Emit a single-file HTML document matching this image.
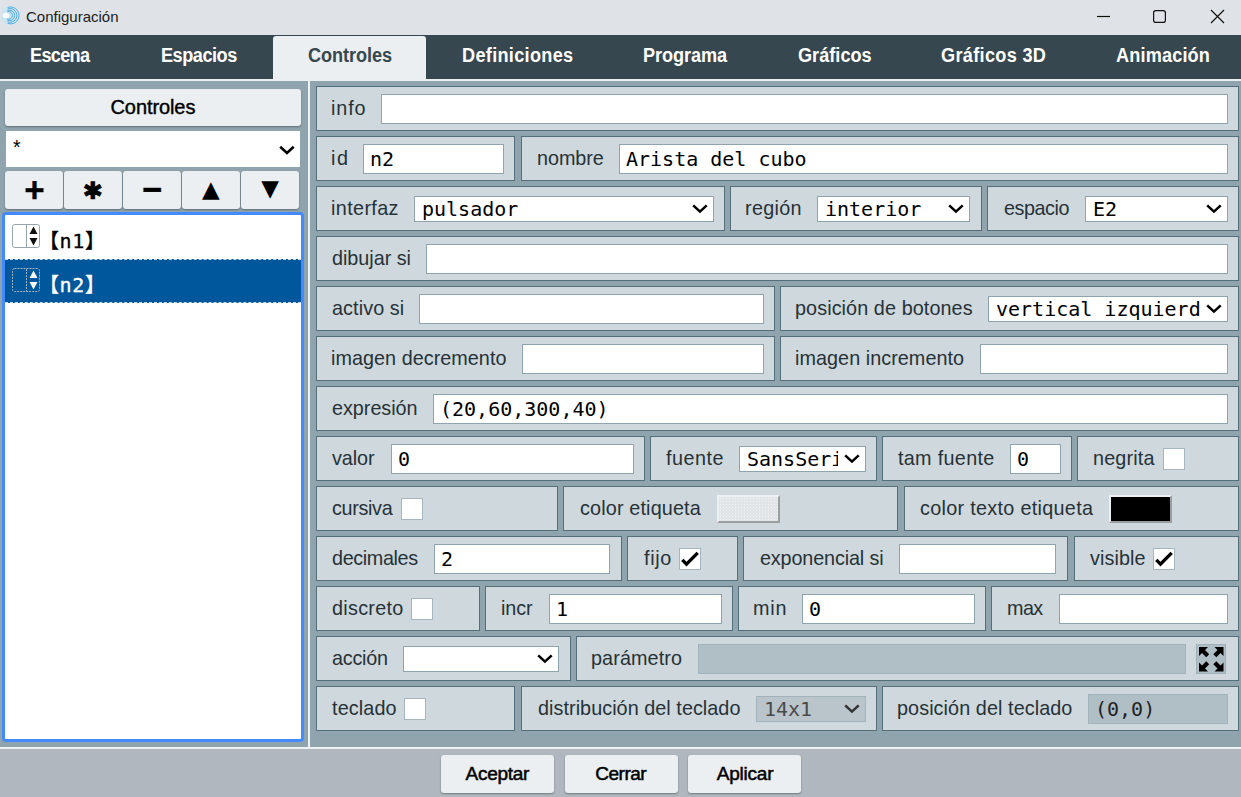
<!DOCTYPE html>
<html lang="es">
<head>
<meta charset="utf-8">
<title>Configuración</title>
<style>
*{box-sizing:border-box;margin:0;padding:0}
html,body{width:1241px;height:797px;overflow:hidden}
body{position:relative;background:#90a4ae;font-family:"Liberation Sans",sans-serif;font-size:20px;color:#263238}
#titlebar{position:absolute;left:0;top:0;width:1241px;height:35px;background:#dfe3e8}
#titlebar .ttl{position:absolute;left:26px;top:8px;font-size:15px;color:#1b1b1b;line-height:18px}
#titlebar .logo{position:absolute;left:0;top:5px;width:21px;height:21px}
#titlebar .wc{position:absolute;top:0;height:35px;width:20px}
#tabsbg{position:absolute;left:0;top:35px;width:1241px;height:44px;background:#37474f}
#tabs{position:absolute;left:0;top:35px;width:1241px;height:44px;list-style:none}
#tabs li{position:absolute;top:0;height:44px;line-height:40px;white-space:nowrap;transform:scaleX(.93);transform-origin:0 0;color:#fff;font-weight:bold;font-size:19.5px;letter-spacing:-0.5px}
#tabs li.active{color:#37474f}
#tabbg{position:absolute;left:273px;top:36px;width:153px;height:45px;background:#eceff1;border-radius:3px 3px 0 0}
#line{position:absolute;left:0;top:79px;width:1241px;height:2px;background:#eceff1}
#vline{position:absolute;left:308px;top:81px;width:2px;height:667px;background:#eef1f3}
#hline{position:absolute;left:0;top:747px;width:1241px;height:2px;background:#eef1f3}
#bottom{position:absolute;left:0;top:749px;width:1241px;height:48px;background:#b0b7bf}
.btn{position:absolute;background:#eceff1;border-radius:3px;box-shadow:0 1px 2px rgba(0,0,0,.35);text-align:center;color:#000;font-size:19px}
#bottom .btn{top:6px;width:113px;height:38px;line-height:38px;-webkit-text-stroke:0.5px #000}
.btn span{position:absolute;top:0;white-space:nowrap}
#left .title{left:5px;top:89px;width:296px;height:37px;line-height:36px;font-size:20px;-webkit-text-stroke:0.4px #000}
#left .filter{position:absolute;left:6px;top:131px;width:294px;height:36px;background:#fff}
#left .filter span{position:absolute;left:7px;top:4px;font-size:19.500px;line-height:24px;color:#000}
#left .filter svg{position:absolute;right:4px;top:14px;width:19px;height:12px;fill:none;stroke:#000;stroke-width:2.6}
#left .tool{top:171px;width:58px;height:38px}
#list{position:absolute;left:2px;top:212px;width:302px;height:530px;background:#fff;border:3px solid #448aff;border-radius:4px;list-style:none;overflow:hidden}
#list li{position:relative;height:44px;line-height:44px;font-family:"DejaVu Sans Mono","Noto Sans CJK SC",monospace;font-size:20px;color:#000;padding-left:34px;padding-top:4px;letter-spacing:.6px;-webkit-text-stroke:.3px;white-space:nowrap}
#list li.selected{background:#01579b;color:#fff;border-top:1px dashed #cfd8dc;border-bottom:1px dashed #cfd8dc;padding-top:3px}
#list li.selected .ico{top:8px}
#list li .ico{position:absolute;left:7px;top:9px;width:28px;height:24px}
.box{position:absolute;height:45px;background:#cfd8dc;border:1px solid #546e7a}
.box label{position:absolute;top:0;line-height:43px;white-space:nowrap;font-size:19.8px;color:#263238}
.box input{position:absolute;top:7px;height:30px;border:1px solid #90a4ae;background:#fff;font-family:"DejaVu Sans Mono",monospace;font-size:20px;color:#000;padding:0 0 0 6px;outline:none;border-radius:0}
.box input.dis{background:#b0bec5;border-color:#a3b3bb;color:#222}
.sel{position:absolute;top:9px;height:26px;border:1px solid #90a4ae;background:#fff;font-family:"DejaVu Sans Mono",monospace;font-size:20px;color:#000;overflow:hidden;white-space:nowrap}
.sel span{position:absolute;left:7px;top:0;line-height:25px}
.sel svg{position:absolute;right:0;top:0;width:27px;height:24px;background:#fff;fill:none;stroke:#000;stroke-width:2.6;padding:7px 4px 5px 4px}
.sel.dis{background:#bac5cb;border-color:#a3b3bb;color:#4a4a4a}
.sel.dis svg{background:#bac5cb;stroke:#333}
.chk{position:absolute;top:11px;width:22px;height:22px;background:#fff;border:1px solid #a7b6be}
.chk svg{position:absolute;left:-1px;top:-1px;width:22px;height:22px;fill:none;stroke:#000;stroke-width:3.4}
.colbtn{position:absolute;top:8px;height:28px;border:2px solid #eef1f3;border-right-color:#9b9d9e;border-bottom-color:#9b9d9e}
.colbtn.dots{background-image:radial-gradient(rgba(255,255,255,.45) .6px,transparent .9px);background-size:3px 3px}
.expand{position:absolute;top:7px;width:30px;height:30px;border:1px solid #9fb0b9;background:#b0bec5}
.expand svg{position:absolute;left:-1px;top:-1px;width:30px;height:30px;fill:#000}
</style>
</head>
<body>
<div id="titlebar">
<svg class="logo" viewBox="0 0 21 21"><circle cx="10.300" cy="10.400" r="9.400" fill="#c6e5f3"/><g fill="none" stroke="#4fa3da" stroke-width=".9"><path d="M7.66 2.53A8.4 8.4 0 1 1 7.66 18.27"/><path d="M7.62 4.03A6.8 6.8 0 1 1 7.62 16.77"/><path d="M7.45 5.43A5.3 5.3 0 1 1 7.45 15.37"/><path d="M7.13 6.75A3.9 3.9 0 1 1 7.13 14.05"/></g><ellipse cx="5.900" cy="10.400" rx="3.300" ry="2.700" fill="#fff"/></svg>
<span class="ttl">Configuración</span>
<svg class="wc" style="left:1094px" viewBox="0 0 20 35"><path d="M3 16.500h13" stroke="#111" stroke-width="1.200" fill="none"/></svg>
<svg class="wc" style="left:1150px" viewBox="0 0 20 35"><rect x="3.6" y="10.6" width="11.8" height="11.8" rx="2.2" stroke="#111" stroke-width="1.2" fill="none"/></svg>
<svg class="wc" style="left:1207px" viewBox="0 0 20 35"><path d="M4 10l13 13M17 10l-13 13" stroke="#111" stroke-width="1.200" fill="none"/></svg>
</div>
<div id="tabsbg"></div>
<div id="line"></div>
<div id="tabbg"></div>
<ul id="tabs"><li style="left:29.70px;letter-spacing:-0.740px">Escena</li><li style="left:160.80px;letter-spacing:-0.514px">Espacios</li><li class="active" style="left:307.60px;letter-spacing:-0.063px">Controles</li><li style="left:462.40px;letter-spacing:0.327px">Definiciones</li><li style="left:642.50px;letter-spacing:-0.100px">Programa</li><li style="left:797.70px;letter-spacing:0.014px">Gráficos</li><li style="left:941.10px;letter-spacing:0.340px">Gráficos 3D</li><li style="left:1115.60px;letter-spacing:0.163px">Animación</li></ul>
<div id="vline"></div>
<div id="left">
<div class="btn title"><span style="left:105.50px;letter-spacing:-0.088px">Controles</span></div>
<div class="filter"><span>*</span><svg viewBox="0 0 19 12"><path d="M3.200 1.800 L9.950 8 L16.700 1.800"/></svg></div>
<div class="btn tool" style="left:5px"><span style="left:19.200px;top:.6px;font:bold 35px/35px 'Liberation Sans',sans-serif;-webkit-text-stroke:.3px #000">+</span></div>
<div class="btn tool" style="left:64px"><span style="left:18.800px;top:8.200px;font:normal 24px/24px 'DejaVu Sans',sans-serif;-webkit-text-stroke:.7px #000">✱</span></div>
<div class="btn tool" style="left:123px"><span style="left:19.400px;top:1.200px;font:bold 34px/34px 'Liberation Sans',sans-serif;-webkit-text-stroke:.6px #000">−</span></div>
<div class="btn tool" style="left:182px"><span style="left:20.070px;top:6.600px;font:normal 23px/23px 'DejaVu Sans',sans-serif">▲</span></div>
<div class="btn tool" style="left:241px"><span style="left:20.300px;top:5.600px;font:normal 23px/23px 'DejaVu Sans',sans-serif">▼</span></div>
<ul id="list">
<li><svg class="ico" viewBox="0 0 28 24"><rect x=".5" y=".5" width="27" height="23" rx="2" fill="#fff" stroke="#9aa5aa"/><path d="M14.500 1v22" stroke="#9aa5aa"/><path d="M21.500 2.500l4 7.500h-8z M21.500 21.500l4-7.500h-8z" fill="#111"/></svg>【n1】</li>
<li class="selected"><svg class="ico" viewBox="0 0 28 24"><rect x=".5" y=".5" width="27" height="23" rx="2" fill="none" stroke="#9ab4c8" stroke-dasharray="2 1"/><path d="M14.500 1v22" stroke="#9ab4c8" stroke-dasharray="2 1"/><path d="M21.500 2.500l4 7.500h-8z M21.500 21.500l4-7.500h-8z" fill="#f4f8fb"/></svg>【n2】</li>
</ul>
</div>
<div id="right">
<div class="box" style="left:316px;top:86px;width:923px"><label style="left:14.00px;letter-spacing:0.867px">info</label><input type="text" class="" style="left:64px;width:847px" value=""></div>
<div class="box" style="left:316px;top:136px;width:199px"><label style="left:14.00px;letter-spacing:1.600px">id</label><input type="text" class="" style="left:46px;width:141px" value="n2"></div>
<div class="box" style="left:521px;top:136px;width:718px"><label style="left:15.00px;letter-spacing:-0.040px">nombre</label><input type="text" class="" style="left:97px;width:609px" value="Arista del cubo"></div>
<div class="box" style="left:316px;top:186px;width:409px"><label style="left:14.00px;letter-spacing:0.371px">interfaz</label><div class="sel " style="left:97px;width:300px"><span>pulsador</span><svg viewBox="0 0 19 12"><path d="M3.200 1.400 L9.950 7.600 L16.700 1.400"/></svg></div></div>
<div class="box" style="left:730px;top:186px;width:252px"><label style="left:14.00px;letter-spacing:0.320px">región</label><div class="sel " style="left:86px;width:153px"><span>interior</span><svg viewBox="0 0 19 12"><path d="M3.200 1.400 L9.950 7.600 L16.700 1.400"/></svg></div></div>
<div class="box" style="left:987px;top:186px;width:252px"><label style="left:16.00px;letter-spacing:-0.467px">espacio</label><div class="sel " style="left:97px;width:143px"><span>E2</span><svg viewBox="0 0 19 12"><path d="M3.200 1.400 L9.950 7.600 L16.700 1.400"/></svg></div></div>
<div class="box" style="left:316px;top:236px;width:923px"><label style="left:15.00px;letter-spacing:-0.022px">dibujar si</label><input type="text" class="" style="left:109px;width:802px" value=""></div>
<div class="box" style="left:316px;top:286px;width:459px"><label style="left:15.00px;letter-spacing:0.100px">activo si</label><input type="text" class="" style="left:102px;width:345px" value=""></div>
<div class="box" style="left:780px;top:286px;width:459px"><label style="left:14.00px;letter-spacing:0.089px">posición de botones</label><div class="sel " style="left:207px;width:240px"><span>vertical izquierda</span><svg viewBox="0 0 19 12"><path d="M3.200 1.400 L9.950 7.600 L16.700 1.400"/></svg></div></div>
<div class="box" style="left:316px;top:336px;width:459px"><label style="left:14.00px;letter-spacing:0.037px">imagen decremento</label><input type="text" class="" style="left:205px;width:242px" value=""></div>
<div class="box" style="left:780px;top:336px;width:459px"><label style="left:14.00px;letter-spacing:0.050px">imagen incremento</label><input type="text" class="" style="left:199px;width:248px" value=""></div>
<div class="box" style="left:316px;top:386px;width:923px"><label style="left:15.00px;letter-spacing:-0.025px">expresión</label><input type="text" class="" style="left:116px;width:795px" value="(20,60,300,40)"></div>
<div class="box" style="left:316px;top:436px;width:329px"><label style="left:15.00px;letter-spacing:-0.100px">valor</label><input type="text" class="" style="left:74px;width:243px" value="0"></div>
<div class="box" style="left:650px;top:436px;width:227px"><label style="left:15.00px;letter-spacing:0.520px">fuente</label><div class="sel " style="left:88px;width:127px"><span>SansSerif</span><svg viewBox="0 0 19 12"><path d="M3.200 1.400 L9.950 7.600 L16.700 1.400"/></svg></div></div>
<div class="box" style="left:882px;top:436px;width:190px"><label style="left:15.00px;letter-spacing:0.311px">tam fuente</label><input type="text" class="" style="left:127px;width:51px" value="0"></div>
<div class="box" style="left:1077px;top:436px;width:162px"><label style="left:15.00px;letter-spacing:0.167px">negrita</label><span class="chk" style="left:85px"></span></div>
<div class="box" style="left:316px;top:486px;width:242px"><label style="left:15.00px;letter-spacing:-0.333px">cursiva</label><span class="chk" style="left:84px"></span></div>
<div class="box" style="left:563px;top:486px;width:335px"><label style="left:16.00px;letter-spacing:0.154px">color etiqueta</label><span class="colbtn dots" style="left:153px;width:63px;background-color:#e1e5e8"></span></div>
<div class="box" style="left:904px;top:486px;width:335px"><label style="left:15.00px;letter-spacing:0.305px">color texto etiqueta</label><span class="colbtn" style="left:204px;width:63px;background-color:#000"></span></div>
<div class="box" style="left:316px;top:536px;width:306px"><label style="left:15.00px;letter-spacing:-0.375px">decimales</label><input type="text" class="" style="left:117px;width:176px" value="2"></div>
<div class="box" style="left:627px;top:536px;width:111px"><label style="left:16.00px;letter-spacing:0.667px">fijo</label><span class="chk" style="left:51px"><svg viewBox="0 0 22 22"><path d="M3.300 11.900 L7.500 16.100 L18.700 4.900"/></svg></span></div>
<div class="box" style="left:743px;top:536px;width:325px"><label style="left:16.00px;letter-spacing:-0.138px">exponencial si</label><input type="text" class="" style="left:155px;width:157px" value=""></div>
<div class="box" style="left:1074px;top:536px;width:165px"><label style="left:15.00px;letter-spacing:0.100px">visible</label><span class="chk" style="left:78px"><svg viewBox="0 0 22 22"><path d="M3.300 11.900 L7.500 16.100 L18.700 4.900"/></svg></span></div>
<div class="box" style="left:316px;top:586px;width:164px"><label style="left:15.00px;letter-spacing:0.286px">discreto</label><span class="chk" style="left:94px"></span></div>
<div class="box" style="left:485px;top:586px;width:248px"><label style="left:15.00px;letter-spacing:-0.067px">incr</label><input type="text" class="" style="left:63px;width:173px" value="1"></div>
<div class="box" style="left:738px;top:586px;width:248px"><label style="left:14.00px;letter-spacing:0.800px">min</label><input type="text" class="" style="left:63px;width:173px" value="0"></div>
<div class="box" style="left:991px;top:586px;width:248px"><label style="left:15.00px;letter-spacing:-0.600px">max</label><input type="text" class="" style="left:67px;width:169px" value=""></div>
<div class="box" style="left:316px;top:636px;width:255px"><label style="left:15.00px;letter-spacing:-0.240px">acción</label><div class="sel " style="left:86px;width:156px"><span></span><svg viewBox="0 0 19 12"><path d="M3.200 1.400 L9.950 7.600 L16.700 1.400"/></svg></div></div>
<div class="box" style="left:576px;top:636px;width:663px"><label style="left:14.00px;letter-spacing:0.100px">parámetro</label><input type="text" class="dis" style="left:121px;width:488px" value="" disabled><span class="expand" style="left:619px"><svg viewBox="0 0 30 30"><path d="M3 3h9l-3 3 4.2 4.2-3 3L6 9l-3 3z M27.5 3h-9l3 3-4.2 4.2 3 3L24.500 9l3 3z M3 27.500h9l-3-3 4.200-4.200-3-3L6 21.500l-3-3z M27.500 27.500h-9l3-3-4.200-4.200 3-3L24.500 21.500l3-3z"/></svg></span></div>
<div class="box" style="left:316px;top:686px;width:199px"><label style="left:15.00px;letter-spacing:0.133px">teclado</label><span class="chk" style="left:87px"></span></div>
<div class="box" style="left:521px;top:686px;width:356px"><label style="left:16.00px;letter-spacing:0.052px">distribución del teclado</label><div class="sel dis" style="left:234px;width:110px"><span>14x1</span><svg viewBox="0 0 19 12"><path d="M3.200 1.400 L9.950 7.600 L16.700 1.400"/></svg></div></div>
<div class="box" style="left:882px;top:686px;width:357px"><label style="left:14.00px;letter-spacing:0.084px">posición del teclado</label><input type="text" class="dis" style="left:205px;width:140px" value="(0,0)" disabled></div>
</div>
<div id="hline"></div>
<div id="bottom">
<div class="btn" style="left:441px"><span style="left:24.60px;letter-spacing:-0.283px">Aceptar</span></div><div class="btn" style="left:565px"><span style="left:30.30px;letter-spacing:-0.500px">Cerrar</span></div><div class="btn" style="left:688px"><span style="left:28.70px;letter-spacing:-0.200px">Aplicar</span></div>
</div>
</body>
</html>
